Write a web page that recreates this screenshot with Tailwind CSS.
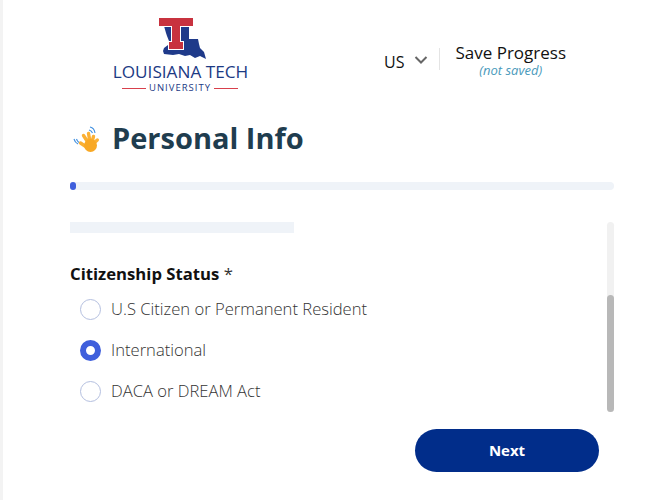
<!DOCTYPE html>
<html lang="en">
<head>
    <meta charset="UTF-8">
    <meta name="viewport" content="width=device-width, initial-scale=1.0">
    <title>Personal Info</title>
    <script src="https://cdn.jsdelivr.net/npm/@tailwindcss/browser@4"></script>
</head>
<body class="bg-white font-['Open_Sans',sans-serif] overflow-hidden">

<div class="w-[668px] h-[500px] border-l-[3px] border-[#f3f3f3] pl-[67px] overflow-hidden">

    <!-- Header -->
    <div class="flex h-[103px]">
        <div class="w-[200px] pl-[43px] pt-[18px]">
            <svg class="block ml-[46px]" width="48" height="42" viewBox="0 0 48 42">
                <path d="M5 8h25v13h9l1 5 1 4 4 4 2 7-6-3-5 2-5-3-5 1-6-2-6 1-9-1-1-3 1-3 4-3 1-4-2-5-1-3z" fill="#1f3a8a"/>
                <path d="M0 0h34v8H21v16h3v7H10v-7h3V8H0z" fill="#c8323f" stroke="#fff" stroke-width="2" paint-order="stroke"/>
            </svg>
            <div class="ml-[-7px] mt-[3px] w-[149px] text-center text-[17.2px] leading-[18px] font-medium text-[#1c3a84] whitespace-nowrap">LOUISIANA TECH</div>
            <div class="ml-[9px] flex items-center gap-[3px] w-[116px] mt-[1px]">
                <span class="h-px w-[24px] bg-[#d8404c]"></span>
                <span class="text-[9.5px] leading-[12px] tracking-[1px] text-[#1c3a84]">UNIVERSITY</span>
                <span class="h-px w-[24px] bg-[#d8404c]"></span>
            </div>
        </div>

        <div class="flex items-start pt-[42px] pl-[114px]">
            <span class="text-[16px] leading-[22px] mt-[9px] text-[#111]">US</span>
            <svg class="ml-[10px] mt-[11px]" width="14" height="14" viewBox="0 0 14 14" fill="none" stroke="#666" stroke-width="2"><path d="M1.500 4l5.500 5.500L12.500 4"/></svg>
            <div class="ml-[11px] mt-[6px] w-px h-[22px] bg-[#e4e4e4]"></div>
            <div class="ml-[15px] text-center">
                <div class="text-[17px] leading-[21px] text-[#111]">Save Progress</div>
                <div class="text-[13px] leading-[15px] italic text-[#4a9abb]">(not saved)</div>
            </div>
        </div>
    </div>

    <!-- Title -->
    <div class="flex items-center h-[70px]">
        <span class="w-[42px]">
            <svg width="30" height="28" viewBox="0 0 30 28" fill="none">
                <path d="M4 15c.5 2 2 4 4 5M6.500 15c.5 1.500 1 2.500 2.500 3.500" stroke="#3f8fe0" stroke-width="1.100"/>
                <path d="M20 3c2.500 .5 4.500 2.500 5 6M19 6c1.500 .3 3 1.500 3.500 3" stroke="#3f8fe0" stroke-width="1.100"/>
                <g stroke="#fbb034" stroke-width="3.400" stroke-linecap="round">
                    <path d="M19 20L13.500 11.500M20 18L18.500 9.500M22 18L23.500 12.500M24 19L27.300 16M15 22L10.500 19"/>
                </g>
                <circle cx="20.500" cy="21.500" r="6.500" fill="#f8a825"/>
            </svg>
        </span>
        <h1 class="text-[29px] leading-[40px] font-bold text-[#1f3d4f]">Personal Info</h1>
    </div>

    <!-- Progress bar -->
    <div class="relative mt-[9px] w-[544px] h-2 bg-[#eff3f8] rounded-full">
        <div class="absolute left-0 top-0 w-[6px] h-2 rounded-full bg-[#3f5fdc]"></div>
    </div>

    <!-- Scroll area -->
    <div class="flex mt-[32px] w-[544px] justify-between">
        <div>
            <div class="w-[224px] h-[11px] bg-[#eff3f8]"></div>
            <div class="mt-[29px] text-[16.7px] leading-[24px] text-[#111]"><span class="font-bold">Citizenship Status</span> <span class="text-[#333]">*</span></div>

            <div class="mt-[13px] ml-[10px] flex flex-col gap-[20px]">
                <label class="flex items-center gap-[10px] h-[21px] text-[16.6px] font-light text-[#333]">
                    <span class="w-[21px] h-[21px] rounded-full border border-[#b4bfdf] bg-white"></span>
                    U.S Citizen or Permanent Resident
                </label>
                <label class="flex items-center gap-[10px] h-[21px] text-[16.6px] font-light text-[#333]">
                    <span class="w-[21px] h-[21px] rounded-full border-[6px] border-[#3f5fdc] bg-white"></span>
                    International
                </label>
                <label class="flex items-center gap-[10px] h-[21px] text-[16.6px] font-light text-[#333]">
                    <span class="w-[21px] h-[21px] rounded-full border border-[#b4bfdf] bg-white"></span>
                    DACA or DREAM Act
                </label>
            </div>
        </div>

        <!-- Scrollbar -->
        <div class="w-[7px] h-[190px] bg-[#f1f1f1] rounded-full flex flex-col justify-end">
            <div class="h-[117px] bg-[#b8b8b8] rounded-full"></div>
        </div>
    </div>

    <div class="flex justify-end w-[529px] mt-[17px]">
        <button class="w-[184px] h-[43px] rounded-full bg-[#012d8a] text-white text-[15px] font-bold">Next</button>
    </div>
</div>

</body>
</html>
